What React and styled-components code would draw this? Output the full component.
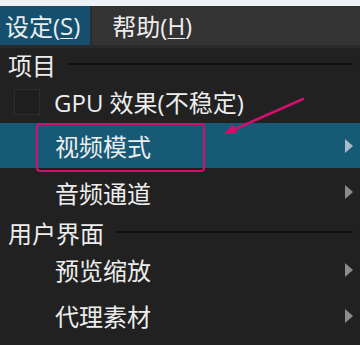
import React from 'react';
import styled, { createGlobalStyle } from 'styled-components';

const GlobalStyle = createGlobalStyle`
    html, body {
        margin: 0;
        padding: 0;
        background: #212121;
    }
    body {
        font-family: "Open Sans", "Noto Sans CJK SC", sans-serif;
    }
`;

const Screen = styled.div`
    position: relative;
    width: 360px;
    height: 345px;
    overflow: hidden;
    background: #212121;
    color: #ededed;
    font-size: 24px;
`;

const TopStrip = styled.div`
    height: 6px;
    background: #eef2f7;
`;

const MenuBar = styled.div`
    display: flex;
    height: 39px;
    background: #333333;
    border-bottom: 3px solid #2a2a2a;
`;

const BarItem = styled.div`
    display: flex;
    align-items: center;
    padding: ${p => p.$active ? '0 10px 0 5px' : '0 0 0 20px'};
    background: ${p => p.$active ? '#14506d' : 'transparent'};
    border-right: ${p => p.$active ? '2px solid #2b2b2b' : 'none'};
    white-space: nowrap;

    u {
        text-decoration: underline;
        text-underline-offset: 3px;
        text-decoration-thickness: 1px;
    }
`;

const Dropdown = styled.div`
    display: flex;
    flex-direction: column;
`;

const Header = styled.div`
    display: flex;
    align-items: center;
    height: ${p => p.$h}px;
    padding: 0 7px 0 8px;
`;

const Rule = styled.div`
    flex: 1;
    height: 2px;
    margin-left: 12px;
    background: #121212;
`;

const Row = styled.div`
    display: flex;
    align-items: center;
    height: ${p => p.$h}px;
    padding: 0 7px 0 55px;
    background: ${p => p.$hover ? '#175a75' : 'transparent'};
    white-space: nowrap;
`;

const Label = styled.span`
    flex: 1;
`;

const Check = styled.span`
    width: 24px;
    height: 24px;
    margin-left: -41px;
    margin-right: 14px;
    border: 1px solid #2d2d2d;
    background: #1e1e1e;
`;

const Caret = styled.span`
    width: 0;
    height: 0;
    border-top: 7px solid transparent;
    border-bottom: 7px solid transparent;
    border-left: 8px solid ${p => p.$hover ? '#a6bccb' : '#8c8c8c'};
`;

const Annotation = styled.svg`
    position: absolute;
    left: 0;
    top: 0;
    pointer-events: none;
`;

const sections = [
    {
        title: '项目', h: 32, items: [
            { label: 'GPU 效果(不稳定)', h: 43, check: true },
            { label: '视频模式', h: 45, sub: true, hover: true },
            { label: '音频通道', h: 48, sub: true },
        ]
    },
    {
        title: '用户界面', h: 32, items: [
            { label: '预览缩放', h: 43, sub: true },
            { label: '代理素材', h: 49, sub: true },
        ]
    },
];

export default function App() {
    return (
        <Screen>
            <GlobalStyle />
            <TopStrip />
            <MenuBar>
                <BarItem $active>设定(<u>S</u>)</BarItem>
                <BarItem>帮助(<u>H</u>)</BarItem>
            </MenuBar>
            <Dropdown>
                {sections.map(sec => (
                    <React.Fragment key={sec.title}>
                        <Header $h={sec.h}>
                            {sec.title}
                            <Rule />
                        </Header>
                        {sec.items.map(it => (
                            <Row key={it.label} $h={it.h} $hover={it.hover}>
                                {it.check && <Check />}
                                <Label>{it.label}</Label>
                                {it.sub && <Caret $hover={it.hover} />}
                            </Row>
                        ))}
                    </React.Fragment>
                ))}
            </Dropdown>
            <Annotation width="360" height="345" viewBox="0 0 360 345">
                <rect x="37" y="124" width="167" height="47" rx="3" fill="none" stroke="#cf116d" strokeWidth="2" />
                <line x1="303" y1="99" x2="233" y2="130" stroke="#cf116d" strokeWidth="2.5" strokeLinecap="round" />
                <polygon points="224,134 237,133.5 233,124.5" fill="#cf116d" />
            </Annotation>
        </Screen>
    );
}
